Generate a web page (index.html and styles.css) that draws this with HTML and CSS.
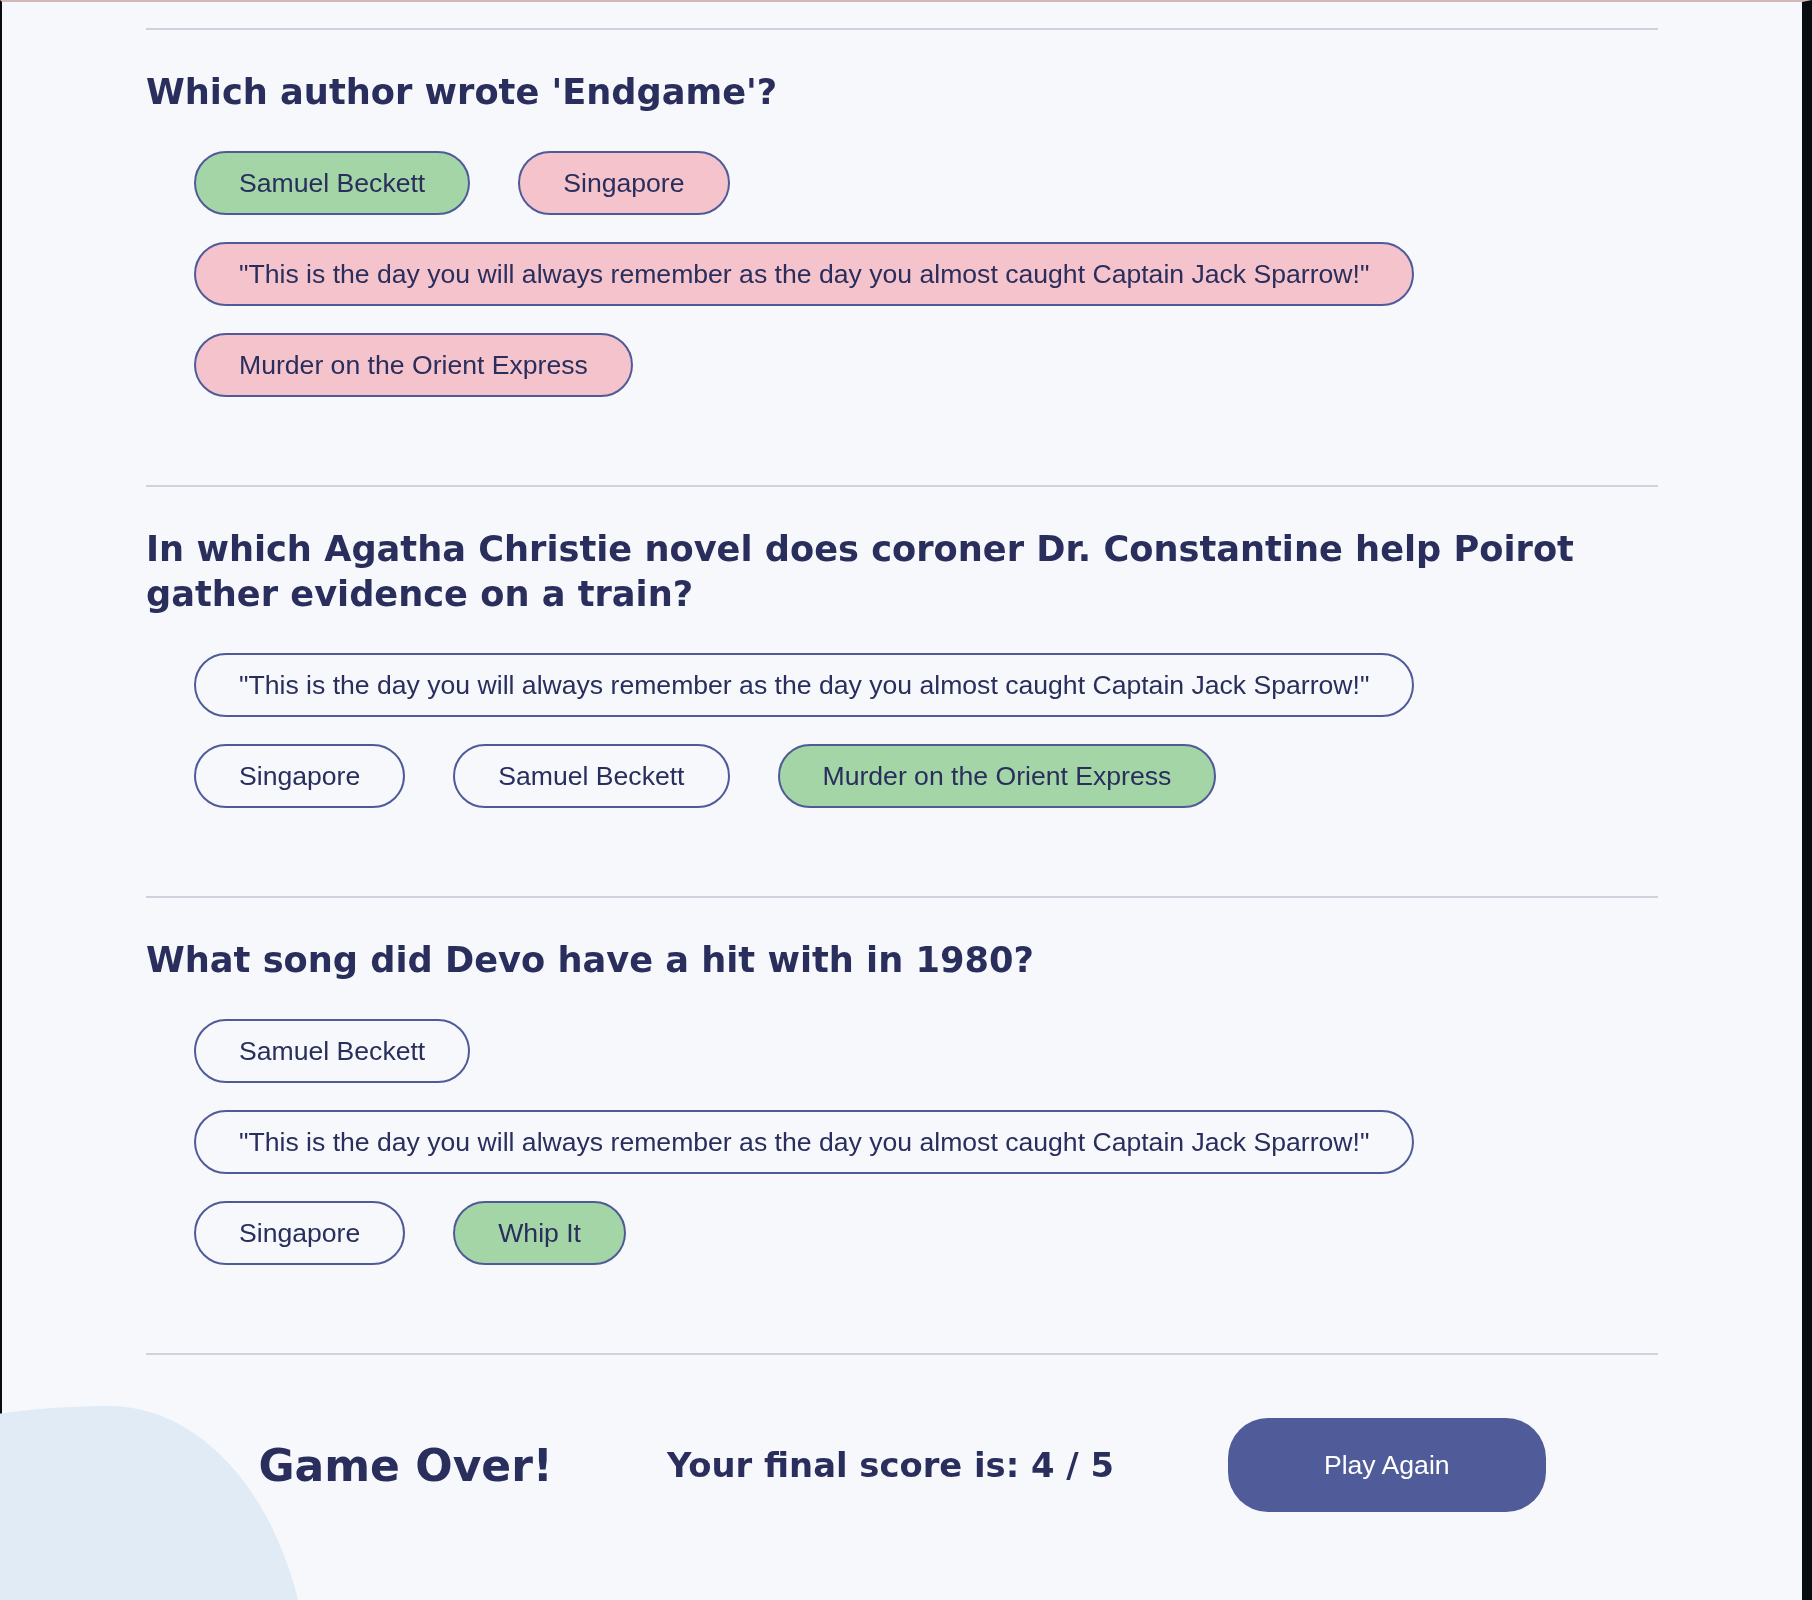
FILE: index.html
```html
<!DOCTYPE html>
<html lang="en">
<head>
<meta charset="utf-8">
<title>Quiz – Game Over</title>
<link rel="stylesheet" href="styles.css">
</head>
<body>
<div class="frame">
  <div class="blob"></div>
  <main class="quiz">
    <section class="question">
      <h2 class="question-title">Which author wrote 'Endgame'?</h2>
      <div class="answers">
        <button class="answer correct">Samuel Beckett</button>
        <button class="answer wrong">Singapore</button>
        <button class="answer wrong">"This is the day you will always remember as the day you almost caught Captain Jack Sparrow!"</button>
        <button class="answer wrong">Murder on the Orient Express</button>
      </div>
    </section>
    <section class="question">
      <h2 class="question-title">In which Agatha Christie novel does coroner Dr. Constantine help Poirot gather evidence on a train?</h2>
      <div class="answers">
        <button class="answer">"This is the day you will always remember as the day you almost caught Captain Jack Sparrow!"</button>
        <button class="answer">Singapore</button>
        <button class="answer">Samuel Beckett</button>
        <button class="answer correct">Murder on the Orient Express</button>
      </div>
    </section>
    <section class="question">
      <h2 class="question-title">What song did Devo have a hit with in 1980?</h2>
      <div class="answers">
        <button class="answer">Samuel Beckett</button>
        <button class="answer">"This is the day you will always remember as the day you almost caught Captain Jack Sparrow!"</button>
        <button class="answer">Singapore</button>
        <button class="answer correct">Whip It</button>
      </div>
    </section>
    <footer class="result">
      <h1 class="game-over">Game Over!</h1>
      <p class="score">Your final score is: 4 / 5</p>
      <button class="play-again">Play Again</button>
    </footer>
  </main>
</div>
</body>
</html>
```
FILE: styles.css
```css
html, body {
  margin: 0;
  padding: 0;
}

body {
  background: #f6f8fb;
  overflow: hidden;
}

.frame {
  position: relative;
  min-height: 100vh;
  box-sizing: border-box;
  border-top: 2px solid #d4b9bc;
  border-left: 2px solid #070d10;
  border-right: 10px solid #070d10;
  background: #f6f8fb;
  padding-top: 26px;
  overflow: hidden;
}

.blob {
  position: fixed;
  left: -90px;
  bottom: -300px;
  width: 400px;
  height: 494px;
  background: #e1ebf6;
  border-top-left-radius: 200px 46px;
  border-top-right-radius: 200px 294px;
  z-index: 0;
}

.quiz {
  position: relative;
  z-index: 1;
  max-width: 1512px;
  margin: 0 auto;
}

.question {
  border-top: 2px solid #d0d1dd;
  padding: 39px 0 88px;
}

.question-title {
  margin: 0 0 37px;
  font-family: "DejaVu Sans", "Liberation Sans", sans-serif;
  font-weight: 700;
  font-size: 35.2px;
  line-height: 45px;
  color: #292e5d;
}

.answers {
  display: flex;
  flex-wrap: wrap;
  align-items: flex-start;
  column-gap: 48px;
  row-gap: 27px;
  padding-left: 48px;
}

.answer {
  font-family: "Liberation Sans", Arial, sans-serif;
  font-size: 26.6px;
  line-height: 30px;
  color: #292e5d;
  background: transparent;
  border: 2px solid #4f5a98;
  border-radius: 999px;
  padding: 15px 43px;
  margin: 0;
  white-space: nowrap;
}

.answer.correct {
  background: #a4d5a6;
}

.answer.wrong {
  background: #f5c3cb;
}

.result {
  border-top: 2px solid #d0d1dd;
  padding: 63px 0 88px;
  display: flex;
  justify-content: center;
  align-items: center;
  gap: 114px;
}

.game-over {
  margin: 0;
  font-family: "DejaVu Sans", "Liberation Sans", sans-serif;
  font-weight: 700;
  font-size: 44px;
  color: #292e5d;
}

.score {
  margin: 0;
  font-family: "DejaVu Sans", "Liberation Sans", sans-serif;
  font-weight: 700;
  font-size: 33.8px;
  color: #292e5d;
}

.play-again {
  font-family: "Liberation Sans", Arial, sans-serif;
  font-size: 26.6px;
  line-height: 30px;
  color: #ffffff;
  background: #505b99;
  border: none;
  border-radius: 40px;
  padding: 32px 96px;
  margin: 0;
}
```
